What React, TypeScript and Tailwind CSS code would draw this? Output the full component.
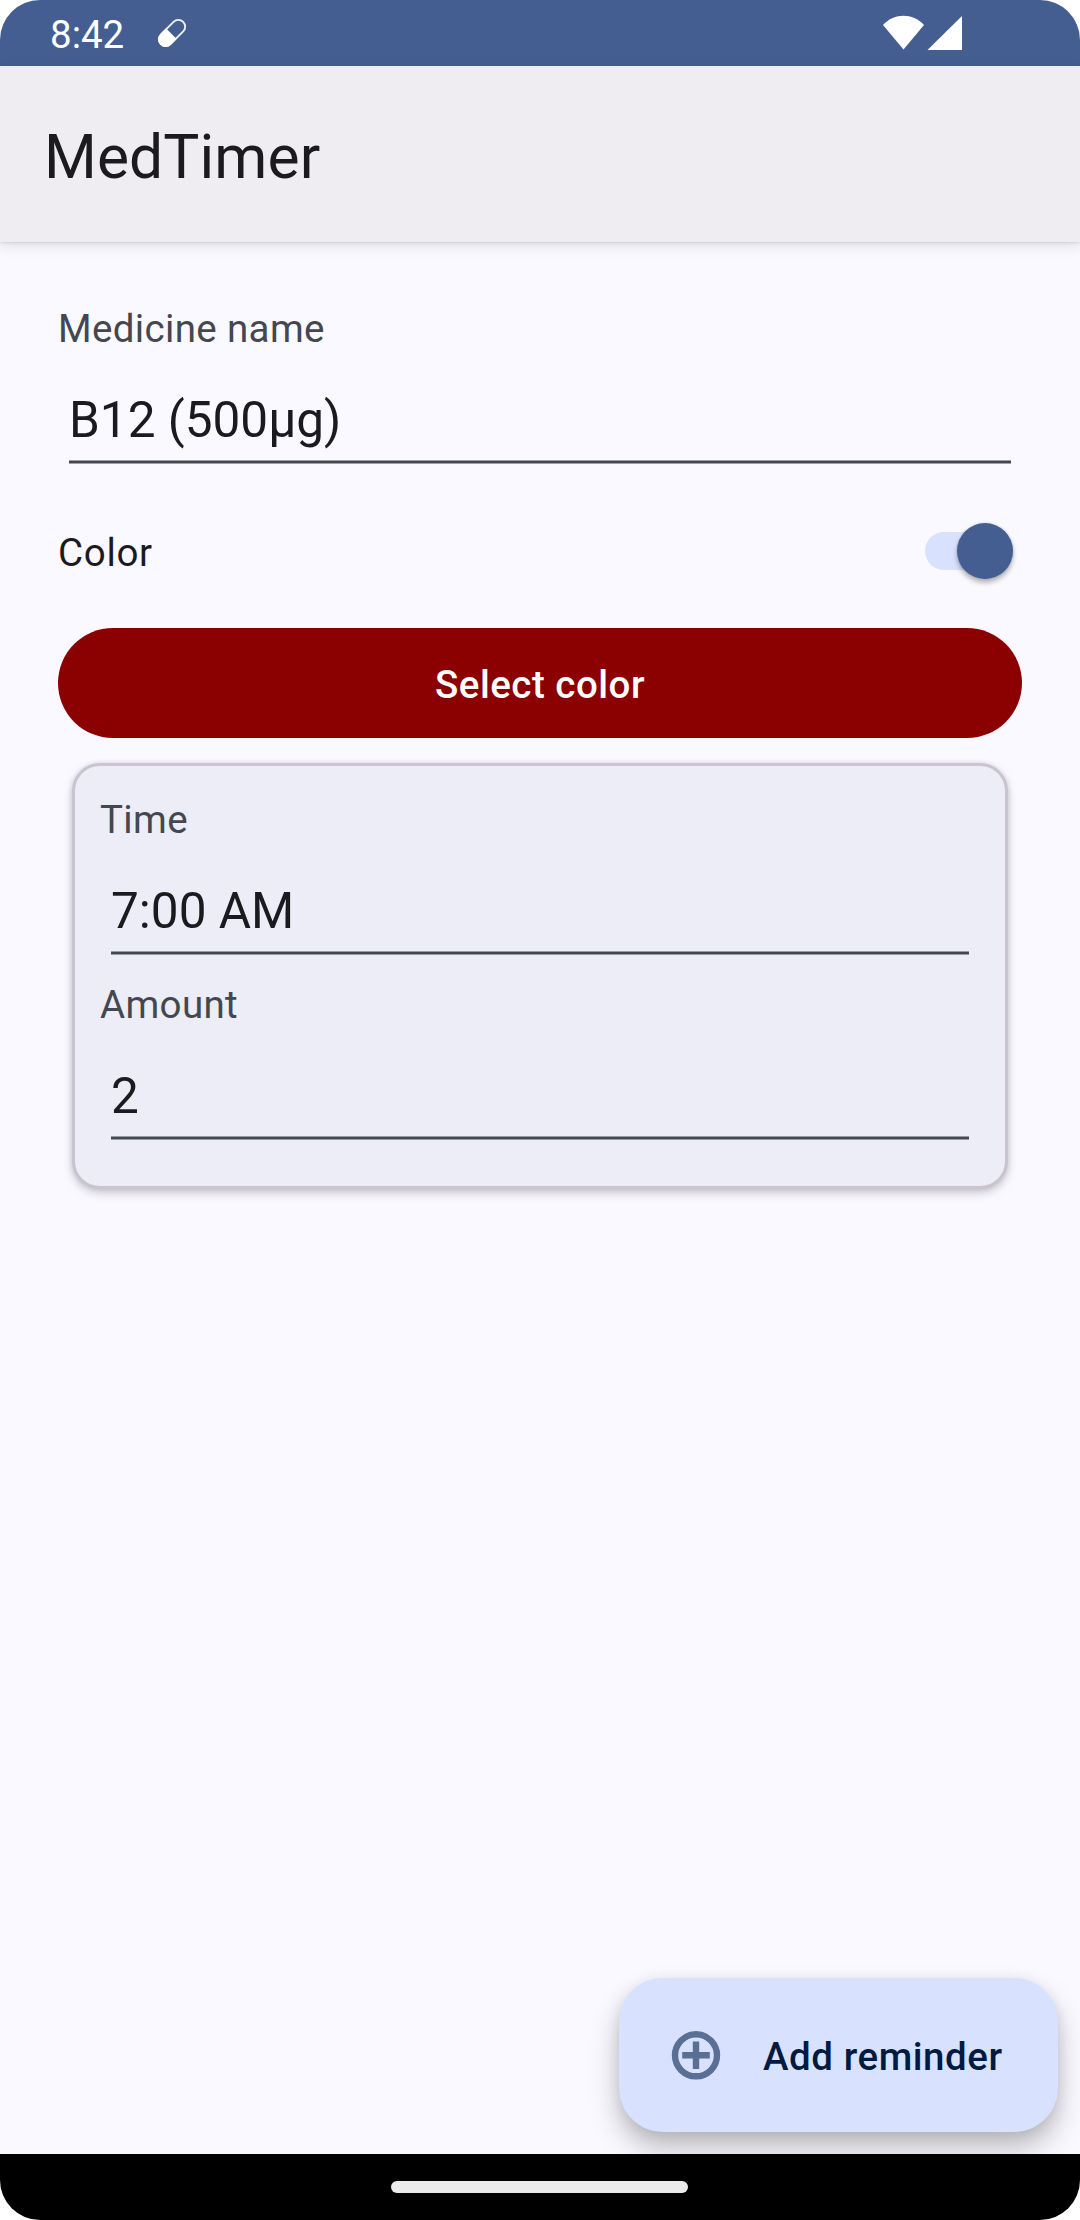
import React from "react";

function StatusBar() {
  return (
    <header className="flex h-[66px] shrink-0 items-center bg-[#445e91] pr-[118px] pl-[50px] text-white">
      <span className="mt-[3px] text-[38.5px] leading-[52px]">8:42</span>
      <svg className="ml-[33px] h-[30px] w-[30px]" viewBox="0 0 30 30" fill="none">
        <g transform="rotate(-45 15 15)">
          <rect x="-0.8" y="8.2" width="31.6" height="13.6" rx="6.8" stroke="#ecf0f8" strokeWidth="1.9" />
          <path d="M14 7.4H6a7.6 7.6 0 0 0 0 15.2h8z" fill="white" />
        </g>
      </svg>
      <svg className="ml-auto h-[36px] w-[80px]" viewBox="0 0 80 36" fill="white">
        <path d="M1 10C12.500 -2.200 30.500 -2.200 42 10L21.500 34.500Z" />
        <path d="M80 1V35H45.500Z" />
      </svg>
    </header>
  );
}

function Field({ label, value, className }: { label: string; value: string; className: string }) {
  return (
    <div className={className}>
      <div className="text-[38.5px] leading-[52px] tracking-[0.35px] text-[#44474f]">{label}</div>
      <div className="mx-[11px] mt-8">
        <div className="pb-[7px] text-[49.5px] leading-[66px] text-[#1b1b1f]">{value}</div>
        <div className="h-1 border-y border-[#44474f]/50 bg-[#44474f] bg-clip-content" />
      </div>
    </div>
  );
}

function Toggle() {
  return (
    <div className="relative mr-[9px] h-14 w-[88px]">
      <div className="mt-[9px] h-[38px] w-[82px] rounded-full bg-[#d8e2ff]" />
      <div className="absolute top-0 right-0 size-14 rounded-full bg-[#445e91] shadow-[0_4px_5px_rgba(0,0,0,0.27),0_0_3px_rgba(0,0,0,0.15)]" />
    </div>
  );
}

export default function App() {
  return (
    <div className="h-[2220px] w-[1080px] bg-white font-['Roboto',sans-serif]">
      <div className="flex h-full flex-col overflow-hidden rounded-[40px] bg-[#faf9ff]">
        <StatusBar />
        <div className="flex h-[176px] shrink-0 items-center bg-[#efedf1] px-11 shadow-[0_4px_14px_rgba(0,0,0,0.1),0_1px_3px_rgba(0,0,0,0.12)]">
          <h1 className="mt-[7px] text-[60.5px] leading-[72px] tracking-[0.1px] text-[#1b1b1f]">MedTimer</h1>
        </div>
        <main className="flex flex-1 flex-col px-[58px] pt-[61px] pb-[22px]">
          <Field label="Medicine name" value="B12 (500µg)" className="" />
          <div className="mt-[59px] flex h-14 items-center justify-between">
            <span className="mt-1 text-[38.5px] leading-[52px] tracking-[0.69px] text-[#1b1b1f]">Color</span>
            <Toggle />
          </div>
          <button className="mt-[49px] h-[110px] rounded-full bg-[#8b0000] pt-1 text-[38.5px] font-medium tracking-[0.5px] text-white">
            Select color
          </button>
          <section className="mx-[14px] mt-[25px] h-[426px] rounded-[28px] border-[3px] border-[#c9c4d0] bg-[#ecedf6] px-[25px] pt-7 shadow-[0_4px_10px_rgba(0,0,0,0.2),0_0_5px_rgba(0,0,0,0.1)]">
            <Field label="Time" value="7:00 AM" className="" />
            <Field label="Amount" value="2" className="mt-6" />
          </section>
          <button className="mt-auto -mr-9 flex h-[154px] w-[439px] items-center self-end rounded-[44px] bg-[#d8e2ff] pl-[52px] text-[#001a41] shadow-[0_16px_28px_rgba(0,0,0,0.25),0_2px_14px_rgba(0,0,0,0.08)]">
            <svg className="size-[50px]" viewBox="0 0 50 50" fill="none" stroke="#5a6f94">
              <circle cx="25" cy="25.300" r="21" strokeWidth="6.400" />
              <path d="M25 11.500v27.500M11.200 25.300h27.600" strokeWidth="6.400" />
            </svg>
            <span className="mt-1 ml-[42px] text-[38.5px] leading-[52px] font-medium tracking-[0.55px]">Add reminder</span>
          </button>
        </main>
        <footer className="z-10 flex h-[66px] shrink-0 bg-black pt-[27px] pl-[391px]">
          <div className="h-3 w-[297px] rounded-full bg-[#ebebeb]" />
        </footer>
      </div>
    </div>
  );
}
